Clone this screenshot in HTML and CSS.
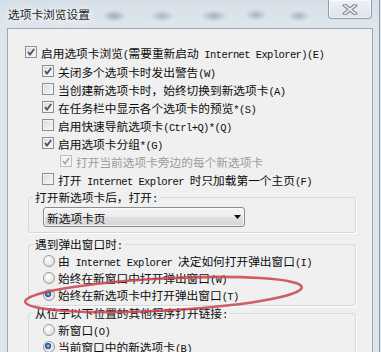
FILE: index.html
```html
<!DOCTYPE html>
<html lang="zh-CN">
<head>
    <meta charset="UTF-8">
    <title>选项卡浏览设置</title>
    <link rel="stylesheet" href="styles.css">
</head>
<body>
<div class="window">
    <div class="titlebar">
        <span class="title">选项卡浏览设置</span>
        <div class="close">
            <svg width="18" height="11" viewBox="0 0 18 11">
                <path d="M4 1.5L14 9.5M14 1.5L4 9.5" stroke="#8a8f96" stroke-width="4" stroke-linecap="square"/>
                <path d="M4 1.5L14 9.5M14 1.5L4 9.5" stroke="#f6f7f8" stroke-width="1.6" stroke-linecap="square"/>
            </svg>
        </div>
    </div>

    <div class="client">
        <div class="row lv0 first">
            <span class="box"><svg viewBox="0 0 10 10"><path d="M2 5l2 2.6L8.2 2"/></svg></span>
            <span class="txt">启用选项卡浏览<span class="lat">(</span>需要重新启动<span class="lat"> Internet Explorer)(E)</span></span>
        </div>
        <div class="row lv1">
            <span class="box"><svg viewBox="0 0 10 10"><path d="M2 5l2 2.6L8.2 2"/></svg></span>
            <span class="txt">关闭多个选项卡时发出警告<span class="lat">(W)</span></span>
        </div>
        <div class="row lv1">
            <span class="box"></span>
            <span class="txt">当创建新选项卡时，始终切换到新选项卡<span class="lat">(A)</span></span>
        </div>
        <div class="row lv1">
            <span class="box"><svg viewBox="0 0 10 10"><path d="M2 5l2 2.6L8.2 2"/></svg></span>
            <span class="txt">在任务栏中显示各个选项卡的预览<span class="lat">*(S)</span></span>
        </div>
        <div class="row lv1">
            <span class="box"></span>
            <span class="txt">启用快速导航选项卡<span class="lat">(Ctrl+Q)*(Q)</span></span>
        </div>
        <div class="row lv1">
            <span class="box"><svg viewBox="0 0 10 10"><path d="M2 5l2 2.6L8.2 2"/></svg></span>
            <span class="txt">启用选项卡分组<span class="lat">*(G)</span></span>
        </div>
        <div class="row lv2 disabled">
            <span class="box"><svg viewBox="0 0 10 10"><path d="M2 5l2 2.6L8.2 2"/></svg></span>
            <span class="txt">打开当前选项卡旁边的每个新选项卡</span>
        </div>
        <div class="row lv1">
            <span class="box"></span>
            <span class="txt">打开<span class="lat"> Internet Explorer </span>时只加载第一个主页<span class="lat">(F)</span></span>
        </div>

        <fieldset class="group g-newtab">
            <legend>打开新选项卡后，打开<span class="lat">:</span></legend>
            <div class="select">
                <span>新选项卡页</span>
                <svg class="arrow" width="7" height="4" viewBox="0 0 7 4"><path d="M0 0h7L3.5 4z"/></svg>
            </div>
        </fieldset>

        <fieldset class="group g-popup">
            <legend>遇到弹出窗口时<span class="lat">:</span></legend>
            <div class="row radio-row"><span class="radio"></span><span class="txt">由<span class="lat"> Internet Explorer </span>决定如何打开弹出窗口<span class="lat">(I)</span></span></div>
            <div class="row radio-row"><span class="radio"></span><span class="txt">始终在新窗口中打开弹出窗口<span class="lat">(W)</span></span></div>
            <div class="row radio-row"><span class="radio on"></span><span class="txt">始终在新选项卡中打开弹出窗口<span class="lat">(T)</span></span></div>
        </fieldset>

        <fieldset class="group g-links">
            <legend>从位于以下位置的其他程序打开链接<span class="lat">:</span></legend>
            <div class="row radio-row"><span class="radio"></span><span class="txt">新窗口<span class="lat">(O)</span></span></div>
            <div class="row radio-row"><span class="radio on"></span><span class="txt">当前窗口中的新选项卡<span class="lat">(B)</span></span></div>
        </fieldset>
    </div>

    <!-- hand drawn red mark over the popup option -->
    <svg class="mark" width="381" height="352" viewBox="0 0 381 352">
        <ellipse cx="163.5" cy="294.5" rx="138.5" ry="16" transform="rotate(-3 163.5 294.5)"
                 fill="none" stroke="#c8434c" stroke-width="2.6" opacity="0.85"/>
    </svg>
</div>
</body>
</html>
```

FILE: styles.css
```css
html, body {
    margin: 0;
    padding: 0;
}
body {
    width: 381px;
    height: 352px;
    overflow: hidden;
    background: #dde5ec;
    font-family: "Noto Sans CJK SC", sans-serif;
    font-size: 11.7px;
    color: #0c0c0c;
}
.window {
    position: relative;
    width: 379px;
    height: 352px;
    border-right: 1px solid #8e9dac;
}
.titlebar {
    height: 28px;
    display: flex;
    justify-content: space-between;
    align-items: flex-start;
    background:
        radial-gradient(ellipse 12px 6px at 114px 16px, rgba(112,124,136,.55), rgba(112,124,136,0)),
        radial-gradient(ellipse 12px 6px at 162px 16px, rgba(112,124,136,.45), rgba(112,124,136,0)),
        radial-gradient(ellipse 13px 6px at 214px 16px, rgba(112,124,136,.5), rgba(112,124,136,0)),
        radial-gradient(ellipse 11px 6px at 256px 15px, rgba(112,124,136,.45), rgba(112,124,136,0)),
        radial-gradient(ellipse 11px 6px at 299px 16px, rgba(112,124,136,.45), rgba(112,124,136,0)),
        linear-gradient(#d6dfe7, #dfe6ed);
}
.title {
    padding-left: 8px;
    line-height: 28px;
    color: #1c1c1c;
    text-shadow: 0 0 5px #fff, 0 0 8px #fff;
}
.close {
    width: 44px;
    height: 19px;
    box-sizing: border-box;
    margin-right: 7px;
    border: 1px solid #8e9cab;
    border-top: 0;
    border-radius: 0 0 4px 4px;
    background: linear-gradient(#eef2f6, #dce3ea);
    box-shadow: inset 0 0 0 1px rgba(255,255,255,.6);
    display: flex;
    align-items: center;
    justify-content: center;
}
.client {
    margin-left: 7px;
    width: 366px;
    height: 324px;
    box-sizing: border-box;
    border: 1px solid #9ea8b2;
    border-bottom: 0;
    background: #f0f0f0;
    padding-top: 14px;
}
.row {
    display: flex;
    align-items: center;
    height: 18px;
    white-space: nowrap;
}
.row.first {
    margin-bottom: 1px;
}
.lv0 { padding-left: 17px; }
.lv1 { padding-left: 34px; }
.lv2 { padding-left: 52px; }
.lat {
    font-family: "Liberation Mono", monospace;
    font-size: 10.5px;
    letter-spacing: -0.6px;
    line-height: 1;
}
.box {
    width: 12px;
    height: 12px;
    box-sizing: border-box;
    margin-right: 4px;
    border: 1px solid #8e8f90;
    background: linear-gradient(135deg, #d9d9d9, #fafafa);
    box-shadow: inset 0 0 0 1px #f3f3f3;
    display: flex;
    align-items: center;
    justify-content: center;
    flex: none;
}
.box svg {
    width: 10px;
    height: 10px;
    fill: none;
    stroke: #3e4e70;
    stroke-width: 1.7;
}
.disabled {
    color: #9b9b9b;
}
.disabled .box {
    border-color: #bdbdbd;
    background: #f4f4f4;
}
.disabled .box svg {
    stroke: #a9a9a9;
}
.group {
    margin: 0 16px 0 20px;
    padding: 0 0 2px 14px;
    border: 1px solid #d4d9dd;
    border-radius: 3px;
    box-shadow: 1px 1px 0 #fff;
}
.group legend {
    margin-left: -10px;
    padding: 0 2px;
    height: 14px;
    line-height: 14px;
}
.g-newtab { margin-top: 2px; }
.g-popup { margin-top: 4px; }
.g-links { margin-top: 0; }
.select {
    width: 202px;
    height: 20px;
    box-sizing: border-box;
    margin: 3px 0 3px;
    padding: 0 3px 0 3px;
    border: 1px solid #8b8b8b;
    border-radius: 3px;
    background: linear-gradient(#f4f4f4, #ececec 48%, #e0e0e0 52%, #d6d6d6);
    box-shadow: inset 0 0 0 1px rgba(255,255,255,.7);
    display: flex;
    align-items: center;
    justify-content: space-between;
}
.select .arrow {
    fill: #111;
}
.radio-row {
    height: 17px;
}
.group .radio-row:first-of-type {
    margin-top: 1px;
}
.radio {
    width: 12px;
    height: 12px;
    box-sizing: border-box;
    margin-right: 3px;
    border: 1px solid #9a9a9a;
    border-radius: 50%;
    background: radial-gradient(circle at 40% 35%, #ffffff, #e6e6e6 60%, #d2d2d2);
    flex: none;
}
.radio.on {
    background:
        radial-gradient(circle at 42% 40%, #bfe0fa 0, #3f78bf 1.6px, #1f4f8e 3px, rgba(31,79,142,0) 3.4px),
        radial-gradient(circle at 40% 35%, #ffffff, #e6e6e6 60%, #d2d2d2);
}
.mark {
    position: absolute;
    top: 0;
    left: 0;
    pointer-events: none;
}
```
